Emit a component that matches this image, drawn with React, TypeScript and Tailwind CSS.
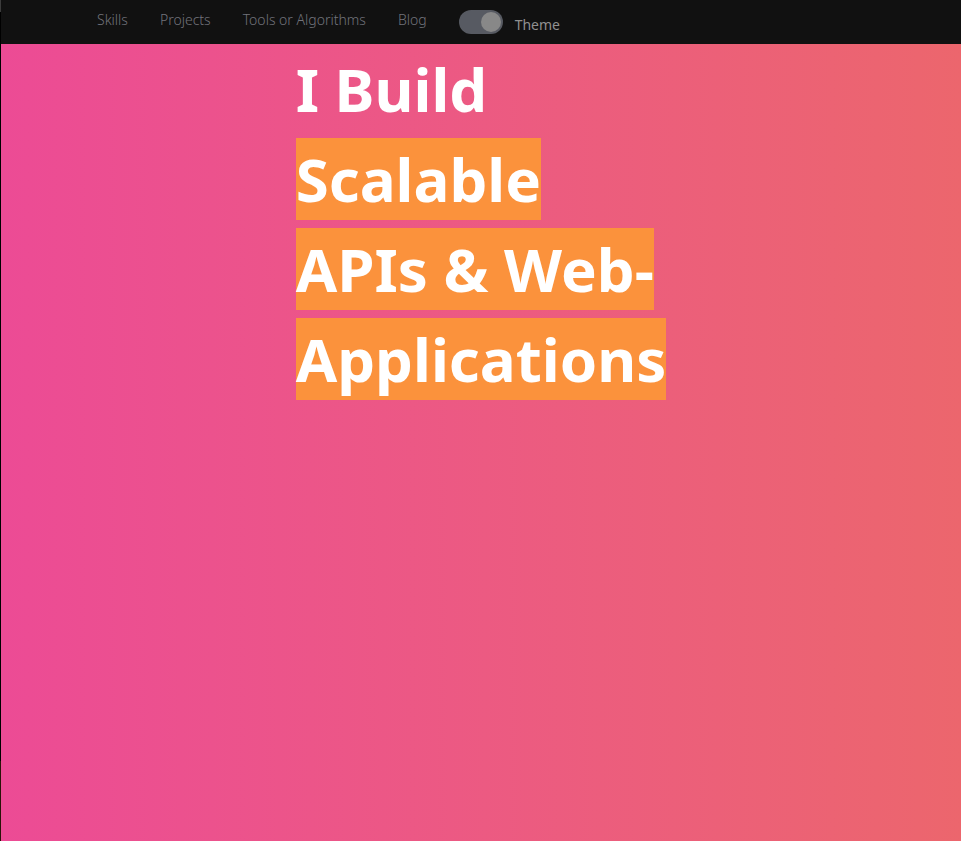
const links = ["Skills", "Projects", "Tools or Algorithms", "Blog"];

export default function App() {
  return (
    <div className="flex min-h-screen font-['Noto_Sans',sans-serif]">
      <div className="flex w-px shrink-0 flex-col bg-black">
        <div className="h-3 bg-[#3c3c3c]" />
        <div className="grow" />
        <div className="h-20 bg-[#2a1408]" />
      </div>
      <div className="flex grow flex-col">
        <header className="flex h-11 items-start gap-8 bg-[#111111] pl-24 pt-2.5">
          <nav className="flex gap-8 text-sm font-light text-[#71737b]">
            {links.map((label) => (
              <a key={label} href="#" className="whitespace-nowrap">
                {label}
              </a>
            ))}
          </nav>
          <label className="flex cursor-pointer gap-3">
            <input
              type="checkbox"
              defaultChecked
              className="relative h-6 w-11 appearance-none rounded-full bg-[#575a62] after:absolute after:left-0.5 after:top-0.5 after:h-5 after:w-5 after:rounded-full after:bg-[#888888] checked:after:translate-x-full"
            />
            <span className="pt-1 text-sm/[22px] text-[#909090]">Theme</span>
          </label>
        </header>
        <main className="flex grow items-start justify-center bg-linear-to-r from-[#ec4b95] to-[#ec666d]">
          <h1 className="text-6xl/[90px] font-bold text-white">
            I Build
            <br />
            <span className="bg-[#fb923c]">
              Scalable
              <br />
              APIs &amp; Web-
              <br />
              Applications
            </span>
          </h1>
        </main>
      </div>
    </div>
  );
}
